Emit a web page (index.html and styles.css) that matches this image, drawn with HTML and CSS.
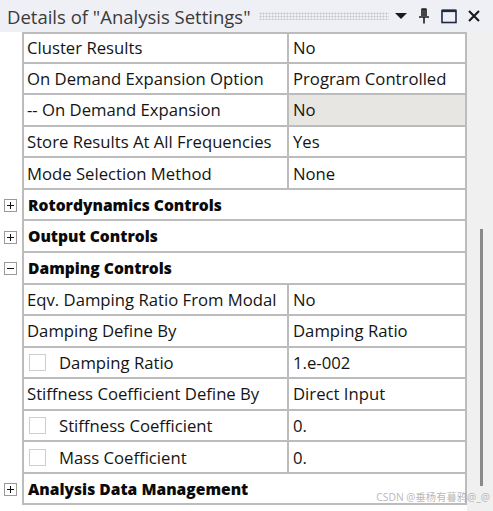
FILE: index.html
```html
<!DOCTYPE html>
<html>
<head>
<meta charset="utf-8">
<link rel="stylesheet" href="styles.css">
</head>
<body>
<div class="panel">
  <div class="titlebar">
    <span class="title">Details of "Analysis Settings"</span>
    <span class="grip"></span>
    <span class="tb-icons">
      <svg class="ico" width="14" height="16" viewBox="0 0 14 16"><path d="M1 5 H13 L7 11 Z" fill="#1b1b1b"/></svg>
      <svg class="ico" width="14" height="16" viewBox="0 0 14 16"><path d="M4.5 1 H9.5 M5 1 V8 M9 1 V8 M7 1 V8 M2 9 H12 M7 9 V15.5" stroke="#1b1b1b" stroke-width="1.6" fill="none"/></svg>
      <svg class="ico" width="18" height="16" viewBox="0 0 18 16"><rect x="2" y="2.5" width="14" height="12" fill="none" stroke="#1e2a44" stroke-width="1.6"/><path d="M2 2.8 H16" stroke="#1e2a44" stroke-width="2.6"/></svg>
      <svg class="ico" width="14" height="16" viewBox="0 0 14 16"><path d="M2 3 L12 13 M12 3 L2 13" stroke="#1b1b1b" stroke-width="2.2" fill="none"/></svg>
    </span>
  </div>
  <div class="content">
    <div class="grid">
      <div class="row first"><div class="gut"></div><div class="name">Cluster Results</div><div class="val">No</div></div>
      <div class="row"><div class="gut"></div><div class="name">On Demand Expansion Option</div><div class="val">Program Controlled</div></div>
      <div class="row"><div class="gut"></div><div class="name">-- On Demand Expansion</div><div class="val ro">No</div></div>
      <div class="row"><div class="gut"></div><div class="name">Store Results At All Frequencies</div><div class="val">Yes</div></div>
      <div class="row"><div class="gut"></div><div class="name">Mode Selection Method</div><div class="val">None</div></div>
      <div class="row group"><div class="gut"><span class="exp plus"></span></div><div class="head">Rotordynamics Controls</div></div>
      <div class="row group"><div class="gut"><span class="exp plus"></span></div><div class="head">Output Controls</div></div>
      <div class="row group"><div class="gut"><span class="exp"></span></div><div class="head">Damping Controls</div></div>
      <div class="row"><div class="gut"></div><div class="name">Eqv. Damping Ratio From Modal</div><div class="val">No</div></div>
      <div class="row"><div class="gut"></div><div class="name">Damping Define By</div><div class="val">Damping Ratio</div></div>
      <div class="row"><div class="gut"></div><div class="name"><span class="chk"></span>Damping Ratio</div><div class="val">1.e-002</div></div>
      <div class="row"><div class="gut"></div><div class="name">Stiffness Coefficient Define By</div><div class="val">Direct Input</div></div>
      <div class="row"><div class="gut"></div><div class="name"><span class="chk"></span>Stiffness Coefficient</div><div class="val">0.</div></div>
      <div class="row"><div class="gut"></div><div class="name"><span class="chk"></span>Mass Coefficient</div><div class="val">0.</div></div>
      <div class="row group"><div class="gut"><span class="exp plus"></span></div><div class="head">Analysis Data Management</div></div>
    </div>
    <div class="scroll"><div class="thumb"></div></div>
  </div>
  <div class="watermark">CSDN @垂杨有暮鸦@_@</div>
</div>
</body>
</html>
```
FILE: styles.css
```css
html, body {
  margin: 0;
  padding: 0;
  background: #ffffff;
}
body {
  width: 493px;
  height: 511px;
  overflow: hidden;
  font-family: "Open Sans", "Noto Sans", "Noto Sans CJK SC", sans-serif;
  color: #141414;
}
.panel {
  position: relative;
  display: flex;
  flex-direction: column;
  height: 511px;
}
.titlebar {
  height: 32px;
  flex: none;
  display: flex;
  align-items: center;
  background: #eef0f5;
  padding-left: 7px;
  box-sizing: border-box;
}
.title {
  font-size: 18.5px;
  color: #3a3a3a;
  white-space: nowrap;
}
.grip {
  flex: 1;
  height: 8px;
  margin: 0 5px 0 8px;
  background-image: radial-gradient(circle, #c4c6cc 0.9px, transparent 1.1px);
  background-size: 3px 3px;
}
.tb-icons {
  display: flex;
  align-items: center;
  gap: 9px;
  padding-right: 12px;
}
.ico { display: block; }
.content {
  flex: 1;
  display: flex;
}
.grid {
  width: 467px;
  flex: none;
  display: flex;
  flex-direction: column;
}
.row {
  display: grid;
  grid-template-columns: 22px 267px 178px;
  height: 31.57px;
  box-sizing: border-box;
}
.row.group {
  grid-template-columns: 22px 445px;
}
.gut {
  display: flex;
  align-items: center;
  padding-left: 4px;
}
.name, .val, .head {
  display: flex;
  align-items: center;
  border-bottom: 2px solid #bcbcbc;
  box-sizing: border-box;
  font-size: 16.7px;
  white-space: nowrap;
  overflow: hidden;
}
.name {
  border-left: 2px solid #bcbcbc;
  border-right: 2px solid #bcbcbc;
  padding-left: 3px;
}
.val {
  border-right: 2px solid #bcbcbc;
  padding-left: 4px;
}
.val.ro { background: #e8e6e2; }
.head {
  border-left: 2px solid #bcbcbc;
  border-right: 2px solid #bcbcbc;
  padding-left: 4px;
  font-weight: 800;
  font-size: 15.6px;
  color: #0a0a0a;
}
.row.first .name, .row.first .val {
  border-top: 2px solid #bcbcbc;
}
.exp {
  width: 13px;
  height: 13px;
  box-sizing: border-box;
  border: 1px solid #9a9a9a;
  background: #fff;
  position: relative;
}
.exp::before {
  content: "";
  position: absolute;
  left: 2px; right: 2px; top: 5px;
  height: 1px;
  background: #111;
}
.exp.plus::after {
  content: "";
  position: absolute;
  top: 2px; bottom: 2px; left: 5px;
  width: 1px;
  background: #111;
}
.chk {
  width: 17px;
  height: 17px;
  box-sizing: border-box;
  border: 1px solid #cfcfcf;
  margin: 0 13px 0 2px;
  flex: none;
}
.scroll {
  flex: 1;
  background: #f0f0f0;
  position: relative;
}
.thumb {
  position: absolute;
  left: 13px;
  top: 197px;
  width: 3px;
  height: 257px;
  background: #8a8a8a;
}
.watermark {
  position: absolute;
  right: 3px;
  bottom: 7px;
  font-size: 10.3px;
  color: rgba(160,160,160,0.75);
  white-space: nowrap;
}
```
